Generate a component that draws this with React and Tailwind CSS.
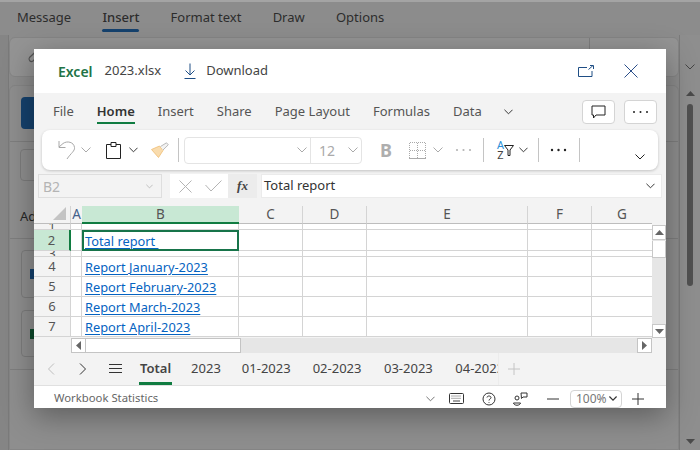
import React from "react";

const Chev = ({ w = 10, h = 6, c = "#222", s = 1, cls = "" }) => (
  <svg width={w} height={h} viewBox="0 0 10 6" fill="none" className={"shrink-0 " + cls}>
    <path d="M0.5 0.5 L5 5 L9.5 0.5" stroke={c} strokeWidth={s} />
  </svg>
);

const Tri = ({ d, c = "#666" }) => {
  const p = { u: "M0 6 L4.5 1 L9 6Z", dn: "M0 1 L9 1 L4.5 6Z", l: "M6 0 L6 9 L1 4.5Z", r: "M1 0 L6 4.5 L1 9Z" }[d];
  const vb = d === "u" || d === "dn" ? "0 0 9 7" : "0 0 7 9";
  return (
    <svg width={d === "u" || d === "dn" ? 9 : 7} height={d === "u" || d === "dn" ? 7 : 9} viewBox={vb}>
      <path d={p} fill={c} />
    </svg>
  );
};

const Dots = ({ c = "#222", r = 1.1 }) => (
  <svg width="17" height="4" viewBox="0 0 17 4">
    <circle cx="2" cy="2" r={r} fill={c} />
    <circle cx="8.5" cy="2" r={r} fill={c} />
    <circle cx="15" cy="2" r={r} fill={c} />
  </svg>
);

const Divider = ({ cls = "" }) => <div className={"w-px h-6 shrink-0 bg-[#c4c4c4] " + cls} />;

const RibbonTab = ({ children, active, cls = "" }) => (
  <div className={"relative h-full flex items-center " + cls}>
    <span className={active ? "font-semibold text-[#333]" : "text-[#555]"}>{children}</span>
    {active && <div className="absolute left-0 right-0 bottom-[6px] h-[2px] bg-[#107c41]" />}
  </div>
);

const Head = ({ children, active, cls = "" }) => (
  <div
    className={
      "flex items-center justify-center text-[13.5px] border-r border-[#d4d4d4] text-[#555] " +
      (active ? "bg-[#c8e8d4] border-b-2 border-b-[#107c41] text-[#2a6a48] border-r-0 " : "border-b border-b-[#bdbdbd] ") +
      cls
    }
  >
    {children}
  </div>
);

const RowNum = ({ children, active }) => (
  <div
    className={
      "flex items-center justify-center text-[13px] text-[#555] border-b border-[#d4d4d4] leading-none overflow-hidden " +
      (active ? "bg-[#c8e8d4] border-r-2 border-r-[#107c41]" : "border-r border-r-[#d4d4d4]")
    }
  >
    {children}
  </div>
);

const Cell = ({ children, selected }) => (
  <div
    className={
      "bg-white overflow-hidden flex items-center whitespace-nowrap text-[12.8px] pt-[2px] text-[#0563c1] underline decoration-1 underline-offset-2 " +
      (selected ? "border-2 border-[#17744a] pl-[1px]" : "border-r border-b border-[#d4d4d4] pl-[3px]")
    }
  >
    {children}
  </div>
);

const rows = [
  { n: "1" },
  { n: "2", active: true, text: "Total report\u00a0" },
  { n: "3" },
  { n: "4", text: "Report January-2023" },
  { n: "5", text: "Report February-2023" },
  { n: "6", text: "Report March-2023" },
  { n: "7", text: "Report April-2023" },
];

export default function App() {
  return (
    <div
      className="relative w-[700px] h-[450px] overflow-hidden bg-[#8c8c8c] text-[#262626] flex flex-col"
      style={{ fontFamily: '"Noto Sans", sans-serif' }}
    >
      {/* Background: Outlook compose */}
      <div className="h-[35px] shrink-0 border-t-2 border-[#a4a4a4] flex items-center pl-[17px] pb-[2px] gap-[31.2px] text-[13px] text-[#2c2c2c]">
        <span>Message</span>
        <div className="relative">
          <span className="font-medium">Insert</span>
          <div className="absolute left-0 right-0 top-[21px] h-[3px] rounded-sm bg-[#15416d]" />
        </div>
        <span>Format text</span>
        <span>Draw</span>
        <span>Options</span>
      </div>
      <div className="flex-1 flex min-h-0">
        <div className="w-[9px] bg-[#858585] border-r border-[#7a7a7a]" />
        <div className="w-[670px] flex flex-col pt-[2px] gap-[8px]">
          <div className="h-[40px] shrink-0 rounded-md bg-[#949494] border border-[#858585] flex items-center pl-[17px]">
            <svg width="18" height="18" viewBox="0 0 18 18" fill="none">
              <path d="M15 4 L6 13 a2.5 2.5 0 0 1 -3.5 -3.5 L11 1.5" stroke="#555" strokeWidth="1.2" />
            </svg>
            <div className="ml-auto mr-[88px] w-px h-full bg-[#7e7e7e]" />
          </div>
          <div className="flex-1 rounded-t-md bg-[#8e8e8e] border border-[#858585] flex flex-col">
            <div className="h-[56px] border-b border-[#7e7e7e] pl-[11px] pt-[11px]">
              <div className="w-[80px] h-[32px] rounded bg-[#15416d]" />
            </div>
            <div className="h-[97px] border-b border-[#7e7e7e] pl-[10px] pt-[7px] flex flex-col">
              <div className="w-[80px] h-[32px] rounded border border-[#7c7c7c]" />
              <span className="text-[13px] mt-[26px]">Add</span>
            </div>
            <div className="pl-[11px] pt-[11px] flex flex-col gap-[12px]">
              <div className="w-[80px] h-[48px] rounded border border-[#7c7c7c] flex items-center pl-[8px]">
                <div className="w-[10px] h-[10px] bg-[#15416d]" />
              </div>
              <div className="w-[80px] h-[47px] rounded border border-[#7c7c7c] flex items-center pl-[8px]">
                <div className="w-[10px] h-[10px] bg-[#0d4a2c]" />
              </div>
            </div>
            <div className="h-px bg-[#7e7e7e] mt-[12px]" />
          </div>
        </div>
        <div className="flex-1 border-l border-[#7a7a7a] flex flex-col items-center pt-[29px] pb-[5px] bg-[#8e8e8e]">
          <Chev c="#444" />
          <div className="mt-[20px]"><Tri d="u" c="#4a4a4a" /></div>
          <div className="w-[6px] h-[182px] rounded-full bg-[#505050] mt-[7px]" />
          <div className="mt-auto"><Tri d="dn" c="#4a4a4a" /></div>
        </div>
      </div>

      {/* Modal */}
      <div className="absolute left-[34px] top-[49px] w-[632px] h-[359px] bg-[#f3f3f3] flex flex-col shadow-[0_8px_28px_rgba(0,0,0,0.35)]">
        {/* Title row */}
        <div className="h-[44px] shrink-0 bg-white flex items-center text-[13px] pl-[24px] pr-[28px]">
          <span className="font-semibold text-[14px] text-[#217346]">Excel</span>
          <span className="ml-[12px] text-[#444]">2023.xlsx</span>
          <svg width="12" height="16" viewBox="0 0 12 16" fill="none" className="ml-[23px]">
            <path d="M6 0.5 V12 M1.5 7.5 L6 12 L10.5 7.5 M0.5 15.5 H11.5" stroke="#1f4e85" strokeWidth="1" />
          </svg>
          <span className="ml-[10px] text-[#444]">Download</span>
          <svg width="16" height="12" viewBox="0 0 16 12" fill="none" className="ml-auto">
            <path d="M9 2.5 H0.5 V11.5 H14 V6 M10.5 4.5 L15 0.5 M12 0.5 H15.5 V4" stroke="#1f4e85" strokeWidth="1" />
          </svg>
          <svg width="14" height="14" viewBox="0 0 14 14" fill="none" className="ml-[30px]">
            <path d="M0.5 0.5 L13.5 13.5 M13.5 0.5 L0.5 13.5" stroke="#2b4f8a" strokeWidth="1" />
          </svg>
        </div>

        {/* Ribbon tabs */}
        <div className="h-[37px] shrink-0 flex items-center pl-[19px] pr-[9px] text-[13px] gap-[23px]">
          <RibbonTab>File</RibbonTab>
          <RibbonTab active>Home</RibbonTab>
          <RibbonTab>Insert</RibbonTab>
          <RibbonTab>Share</RibbonTab>
          <RibbonTab>Page Layout</RibbonTab>
          <RibbonTab>Formulas</RibbonTab>
          <RibbonTab>Data</RibbonTab>
          <Chev w={9} cls="ml-[-1px]" />
          <div className="ml-auto flex gap-[9px]">
            <div className="w-[33px] h-[24px] rounded border border-[#d4d4d4] bg-white flex items-center justify-center">
              <svg width="15" height="14" viewBox="0 0 15 14" fill="none">
                <path d="M1 1 H14 V10 H5 L2.5 13 V10 H1 Z" stroke="#222" strokeWidth="1" />
              </svg>
            </div>
            <div className="w-[33px] h-[24px] rounded border border-[#d4d4d4] bg-white flex items-center justify-center">
              <Dots r={1} />
            </div>
          </div>
        </div>

        {/* Ribbon toolbar */}
        <div className="mx-[8px] h-[40px] shrink-0 rounded-lg bg-white flex items-center pl-[16px] shadow-[0_1px_3px_rgba(0,0,0,0.2)]">
          <svg width="18" height="20" viewBox="0 0 18 20" fill="none" className="shrink-0">
            <path d="M1 1 V7.5 H7.5 M1 7 L5 3.5 C9 0.5 16 2 16.5 7.5 C17 11 13 13 9 19" stroke="#a8a8a8" strokeWidth="1" />
          </svg>
          <Chev c="#aaa" cls="ml-[5px]" />
          <svg width="15" height="17" viewBox="0 0 15 17" fill="none" className="ml-[15px] shrink-0">
            <path d="M5 2.5 H0.5 V16.5 H14.5 V2.5 H10 M5 0.5 H10 V4.5 H5 Z" stroke="#222" strokeWidth="1" />
          </svg>
          <Chev w={9} cls="ml-[8px]" />
          <svg width="18" height="16" viewBox="0 0 18 16" fill="none" className="ml-[13px] shrink-0">
            <path d="M0.5 7.5 L8.5 4 L12 8.5 L7.5 15.5 Z" fill="#f9dcae" stroke="#efbd72" strokeWidth="0.8" />
            <path d="M9.5 4.5 L15.5 0.8 L17.3 2.8 L12 8" fill="#f2f2f2" stroke="#a8a8a8" strokeWidth="0.8" />
          </svg>
          <Divider cls="ml-[9px]" />
          <div className="ml-[5px] w-[178px] h-[27px] shrink-0 rounded border border-[#e4e4e4] flex items-center">
            <div className="w-[126px] h-full border-r border-[#e4e4e4] flex items-center justify-end pr-[3px]">
              <Chev c="#aaa" />
            </div>
            <span className="ml-[8px] text-[14px] text-[#aaa]">12</span>
            <Chev c="#aaa" cls="ml-auto mr-[3px]" />
          </div>
          <span className="ml-[18px] text-[18px] font-bold text-[#aeaeae] leading-none">B</span>
          <svg width="17" height="17" viewBox="0 0 17 17" fill="none" className="ml-[17px] shrink-0" shapeRendering="crispEdges">
            <path d="M0.5 0.5 H16.5 V16 M0.5 0.5 V16 M8.5 0.5 V16 M0.5 8 H16.5" stroke="#aaa" strokeWidth="1" strokeDasharray="1 1" />
            <path d="M0 16.5 H17" stroke="#aaa" strokeWidth="1" />
          </svg>
          <Chev c="#aaa" cls="ml-[7px]" />
          <div className="ml-[12px] flex items-center"><Dots c="#b4b4b4" /></div>
          <Divider cls="ml-[11px]" />
          <div className="ml-[12px] relative w-[18px] h-[20px] shrink-0 text-[11px] leading-[10px] text-center">
            <span className="block w-[9px] text-[#2a8fd8]">A</span>
            <span className="block w-[9px] text-[#444]">Z</span>
            <svg width="10" height="11" viewBox="0 0 10 11" fill="none" className="absolute right-0 top-[5px]">
              <path d="M0.5 0.5 H9.5 L6 5 V10.5 H4 V5 Z" stroke="#222" strokeWidth="1" />
            </svg>
          </div>
          <Chev w={9} cls="ml-[5px]" />
          <Divider cls="ml-[10px]" />
          <div className="ml-[11px] flex items-center"><Dots r={1.2} /></div>
          <Divider cls="ml-[12px]" />
          <Chev cls="ml-[55px] mt-[13px]" />
        </div>

        {/* Formula bar */}
        <div className="h-[24px] mt-[4px] shrink-0 flex items-stretch pl-[4px] pr-[4px]">
          <div className="w-[124px] border border-[#dedede] flex items-center justify-between pl-[4px] pr-[8px] text-[14px] text-[#b4b4b4]">
            B2
            <Chev w={7} h={5} c="#aaa" />
          </div>
          <div className="ml-[8px] w-[87px] flex bg-white">
            <div className="flex-1 flex items-center justify-around pl-[2px]">
              <svg width="13" height="13" viewBox="0 0 13 13" fill="none">
                <path d="M0.5 0.5 L12.5 12.5 M12.5 0.5 L0.5 12.5" stroke="#b4b4b4" />
              </svg>
              <svg width="17" height="12" viewBox="0 0 17 12" fill="none">
                <path d="M0.5 5 L6 11 L16.5 0.5" stroke="#b4b4b4" />
              </svg>
            </div>
            <div className="w-[29px] bg-[#ececec] flex items-center justify-center italic text-[13px] font-semibold text-[#444]" style={{ fontFamily: '"Liberation Serif", serif' }}>
              fx
            </div>
          </div>
          <div className="ml-[4px] flex-1 bg-white border border-[#ebebeb] flex items-center justify-between pl-[2px] pr-[6px] text-[13px] text-[#333]">
            Total report
            <Chev w={9} />
          </div>
        </div>

        {/* Sheet */}
        <div className="mt-[8px] flex h-[132px] shrink-0">
          <div className="w-[618px] grid grid-cols-[37px_11px_157px_64px_64px_161px_64px_60px] grid-rows-[18px_6px_21px_6px_20px_20px_20px_20px] overflow-hidden">
            <div className="flex items-end justify-end border-r border-[#d4d4d4] border-b border-b-[#bdbdbd] pr-[4px] pb-[3px]">
              <svg width="13" height="13" viewBox="0 0 13 13"><path d="M13 0 V13 H0 Z" fill="#c4c4c4" /></svg>
            </div>
            <Head cls="border-r-0 text-[#44608a]">A</Head>
            <Head active>B</Head>
            <Head>C</Head>
            <Head>D</Head>
            <Head>E</Head>
            <Head>F</Head>
            <Head cls="border-r-0">G</Head>
            {rows.map((r) => (
              <React.Fragment key={r.n}>
                <RowNum active={r.active}>{r.n}</RowNum>
                <div className="bg-white border-r border-b border-[#d4d4d4]" />
                <Cell selected={r.active}>{r.text}</Cell>
                {[0, 1, 2, 3].map((i) => (
                  <div key={i} className="bg-white border-r border-b border-[#d4d4d4]" />
                ))}
                <div className="bg-white border-b border-[#d4d4d4]" />
              </React.Fragment>
            ))}
          </div>
          <div className="w-[14px] bg-[#e6e6e6] flex flex-col mt-[19px]">
            <div className="h-[15px] bg-white border border-[#c8c8c8] flex items-center justify-center"><Tri d="u" /></div>
            <div className="h-[17px] bg-white border border-[#c8c8c8] border-t-0 mt-[1px]" />
            <div className="h-[14px] mt-auto bg-white border border-[#c8c8c8] flex items-center justify-center"><Tri d="dn" /></div>
          </div>
        </div>

        {/* Horizontal scrollbar */}
        <div className="h-[15px] shrink-0 ml-[37px] mr-[14px] bg-[#e6e6e6] flex">
          <div className="w-[15px] bg-white border border-[#c4c4c4] flex items-center justify-center"><Tri d="l" /></div>
          <div className="w-[155px] bg-white border border-[#c4c4c4] border-l-0" />
          <div className="ml-auto w-[15px] bg-white border border-[#c4c4c4] flex items-center justify-center"><Tri d="r" /></div>
        </div>

        {/* Sheet tabs */}
        <div className="h-[33px] shrink-0 flex items-stretch border-b border-[#e0e0e0]">
          <div className="flex items-center pl-[13px] w-[464px] overflow-hidden text-[13px] text-[#444] whitespace-nowrap pb-[1px]">
            <svg width="8" height="12" viewBox="0 0 8 12" fill="none" className="shrink-0"><path d="M7 0.5 L1.5 6 L7 11.5" stroke="#bdbdbd" /></svg>
            <svg width="8" height="12" viewBox="0 0 8 12" fill="none" className="ml-[24px] shrink-0"><path d="M1 0.5 L6.5 6 L1 11.5" stroke="#333" /></svg>
            <svg width="13" height="9" viewBox="0 0 13 9" fill="none" className="ml-[22px] shrink-0"><path d="M0 0.5 H13 M0 4.5 H13 M0 8.5 H13" stroke="#333" /></svg>
            <div className="ml-[18px] relative h-full flex items-center">
              <span className="font-semibold">Total</span>
              <div className="absolute left-[-1px] right-[-1px] bottom-[-1px] h-[3px] bg-[#107c41]" />
            </div>
            <span className="ml-[20px]">2023</span>
            <span className="ml-[21px]">01-2023</span>
            <span className="ml-[22px]">02-2023</span>
            <span className="ml-[22.5px]">03-2023</span>
            <span className="ml-[22.5px]">04-2023</span>
          </div>
          <div className="flex items-center pl-[9px] border-l border-[#ececec]">
            <svg width="12" height="12" viewBox="0 0 12 12" fill="none"><path d="M6 0 V12 M0 6 H12" stroke="#c4c4c4" /></svg>
          </div>
        </div>

        {/* Status bar */}
        <div className="flex-1 bg-white flex items-center pl-[20px] pr-[22px] pt-[3px] text-[11.3px] text-[#666]">
          <span>Workbook Statistics</span>
          <Chev w={9} c="#666" cls="ml-auto" />
          <svg width="15" height="11" viewBox="0 0 15 11" fill="none" className="ml-[14px]">
            <rect x="0.5" y="0.5" width="14" height="10" rx="1" stroke="#333" />
            <path d="M2.5 3 H12.5 M2.5 5.3 H12.5" stroke="#555" strokeDasharray="1 1" />
            <path d="M4 8 H11" stroke="#444" />
          </svg>
          <svg width="14" height="14" viewBox="0 0 14 14" fill="none" className="ml-[18px]">
            <circle cx="7" cy="7" r="6" stroke="#333" />
            <path d="M5 5.5 C5 3.5 9 3.5 9 5.5 C9 7 7 7 7 8.5 M7 10 V10.8" stroke="#333" />
          </svg>
          <svg width="15" height="14" viewBox="0 0 15 14" fill="none" className="ml-[17px]">
            <circle cx="4" cy="6" r="2" stroke="#333" />
            <path d="M0.5 11 C1 14 7 14 7.5 11 Z" stroke="#333" />
            <path d="M8 1 H14 V5 H10 L8.5 6.5 Z" stroke="#333" />
          </svg>
          <svg width="12" height="2" viewBox="0 0 12 2" className="ml-[19px]"><path d="M0 1 H12" stroke="#333" /></svg>
          <div className="ml-[11px] w-[52px] h-[18px] rounded border border-[#d4d4d4] flex items-center justify-between pl-[5px] pr-[4px] text-[12px] text-[#777]">
            100%
            <Chev w={8} h={5} s={1.5} c="#333" />
          </div>
          <svg width="12" height="12" viewBox="0 0 12 12" fill="none" className="ml-[10px]"><path d="M6 0 V12 M0 6 H12" stroke="#333" /></svg>
        </div>
      </div>
    </div>
  );
}
